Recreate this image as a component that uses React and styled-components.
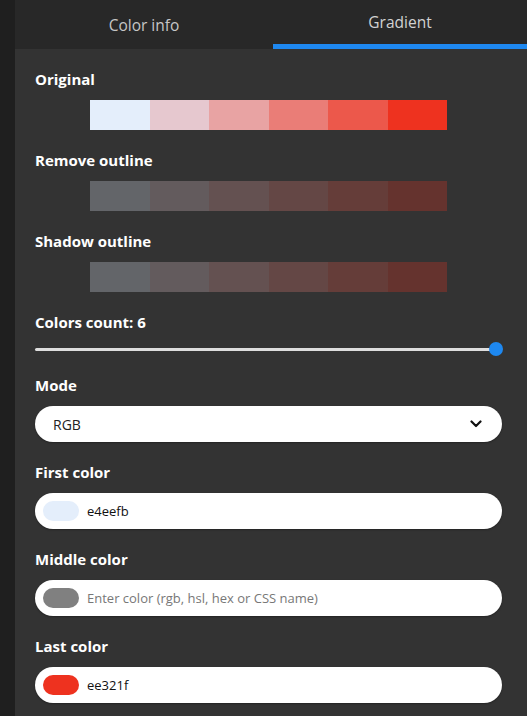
import React from 'react'
import styled, { createGlobalStyle } from 'styled-components'

const GlobalStyle = createGlobalStyle`
    html, body {
        margin: 0;
        padding: 0;
        background: #1e1e1e;
        font-family: "Open Sans", "Noto Sans", sans-serif;
    }
    * { box-sizing: border-box; }
`

const mix = (hex, a) => {
    const bg = [51, 51, 51]
    const c = [1, 3, 5].map((i) => parseInt(hex.slice(i, i + 2), 16))
    const m = c.map((v, i) => Math.round(v * a + bg[i] * (1 - a)))
    return `rgb(${m.join(',')})`
}

const original = ['#e4eefb', '#e6c8cf', '#e8a3a3', '#ea7d77', '#ec584b', '#ee321f']

function App() {
    return (
        <>
            <GlobalStyle />
            <Page>
                <Strip />
                <Panel>
                    <Tabs>
                        <Tab>Color info</Tab>
                        <Tab $active>Gradient</Tab>
                    </Tabs>
                    <Content>
                        <Label>Original</Label>
                        <Swatches>
                            {original.map((c) => <Swatch key={c} $color={c} />)}
                        </Swatches>

                        <Label>Remove outline</Label>
                        <Swatches>
                            {original.map((c) => <Swatch key={c} $color={mix(c, 0.27)} />)}
                        </Swatches>

                        <Label>Shadow outline</Label>
                        <Swatches>
                            {original.map((c) => <Swatch key={c} $color={mix(c, 0.27)} />)}
                        </Swatches>

                        <Label>Colors count: 6</Label>
                        <Slider>
                            <Track />
                            <Thumb />
                        </Slider>

                        <Label>Mode</Label>
                        <Select>
                            <span>RGB</span>
                            <svg width="12" height="8" viewBox="0 0 12 8">
                                <path d="M1.5 1.5 L6 6 L10.5 1.5" fill="none" stroke="#111" strokeWidth="2.2" strokeLinecap="round" strokeLinejoin="round" />
                            </svg>
                        </Select>

                        <Label>First color</Label>
                        <ColorField>
                            <Pill $color="#e4eefb" />
                            <Value>e4eefb</Value>
                        </ColorField>

                        <Label>Middle color</Label>
                        <ColorField>
                            <Pill $color="#808080" />
                            <Value $placeholder>Enter color (rgb, hsl, hex or CSS name)</Value>
                        </ColorField>

                        <Label>Last color</Label>
                        <ColorField>
                            <Pill $color="#ee321f" />
                            <Value>ee321f</Value>
                        </ColorField>
                    </Content>
                </Panel>
            </Page>
        </>
    )
}

const Page = styled.div`
    display: flex;
    min-height: 716px;
`

const Strip = styled.div`
    width: 15px;
    flex-shrink: 0;
    background: #1f1f1f;
`

const Panel = styled.div`
    flex: 1;
    background: #333333;
    display: flex;
    flex-direction: column;
`

const Tabs = styled.div`
    display: grid;
    grid-template-columns: 258px 1fr;
    height: 49px;
    background: #282828;
`

const Tab = styled.div`
    display: flex;
    align-items: center;
    justify-content: center;
    font-size: 15.5px;
    color: ${(p) => (p.$active ? '#d2d2d2' : '#c6c6c6')};
    border-bottom: 5px solid ${(p) => (p.$active ? '#1e88f0' : 'transparent')};
    padding-top: ${(p) => (p.$active ? '0' : '5px')};
    cursor: pointer;
`

const Content = styled.div`
    padding: 20px 25px 20px 20px;
    display: flex;
    flex-direction: column;
`

const Label = styled.div`
    font-size: 15px;
    font-weight: 700;
    line-height: 20px;
    color: #ffffff;
    margin-bottom: 11px;
`

const Swatches = styled.div`
    display: flex;
    justify-content: center;
    margin-bottom: 20px;
`

const Swatch = styled.div`
    width: 59.5px;
    height: 30px;
    background: ${(p) => p.$color};
`

const Slider = styled.div`
    position: relative;
    height: 14px;
    margin: -1px 0 19px;
    display: flex;
    align-items: center;
`

const Track = styled.div`
    width: 100%;
    height: 3px;
    background: #dedede;
    border-radius: 2px;
`

const Thumb = styled.div`
    position: absolute;
    right: -1px;
    top: 0;
    width: 14px;
    height: 14px;
    border-radius: 50%;
    background: #1e88f0;
`

const Select = styled.div`
    height: 36px;
    border-radius: 18px;
    background: #ffffff;
    display: flex;
    align-items: center;
    justify-content: space-between;
    padding: 0 20px 0 18px;
    margin-bottom: 20px;
    font-size: 14px;
    color: #222;
    box-shadow: 0 1px 2px rgba(0, 0, 0, 0.3);
`

const ColorField = styled.div`
    height: 36px;
    border-radius: 18px;
    background: #ffffff;
    display: flex;
    align-items: center;
    gap: 8px;
    padding: 0 8px;
    margin-bottom: 20px;
    box-shadow: 0 1px 2px rgba(0, 0, 0, 0.3);
`

const Pill = styled.div`
    width: 36px;
    height: 20px;
    border-radius: 10px;
    background: ${(p) => p.$color};
    flex-shrink: 0;
`

const Value = styled.span`
    font-size: 13px;
    color: ${(p) => (p.$placeholder ? '#777' : '#111')};
`

export default App
